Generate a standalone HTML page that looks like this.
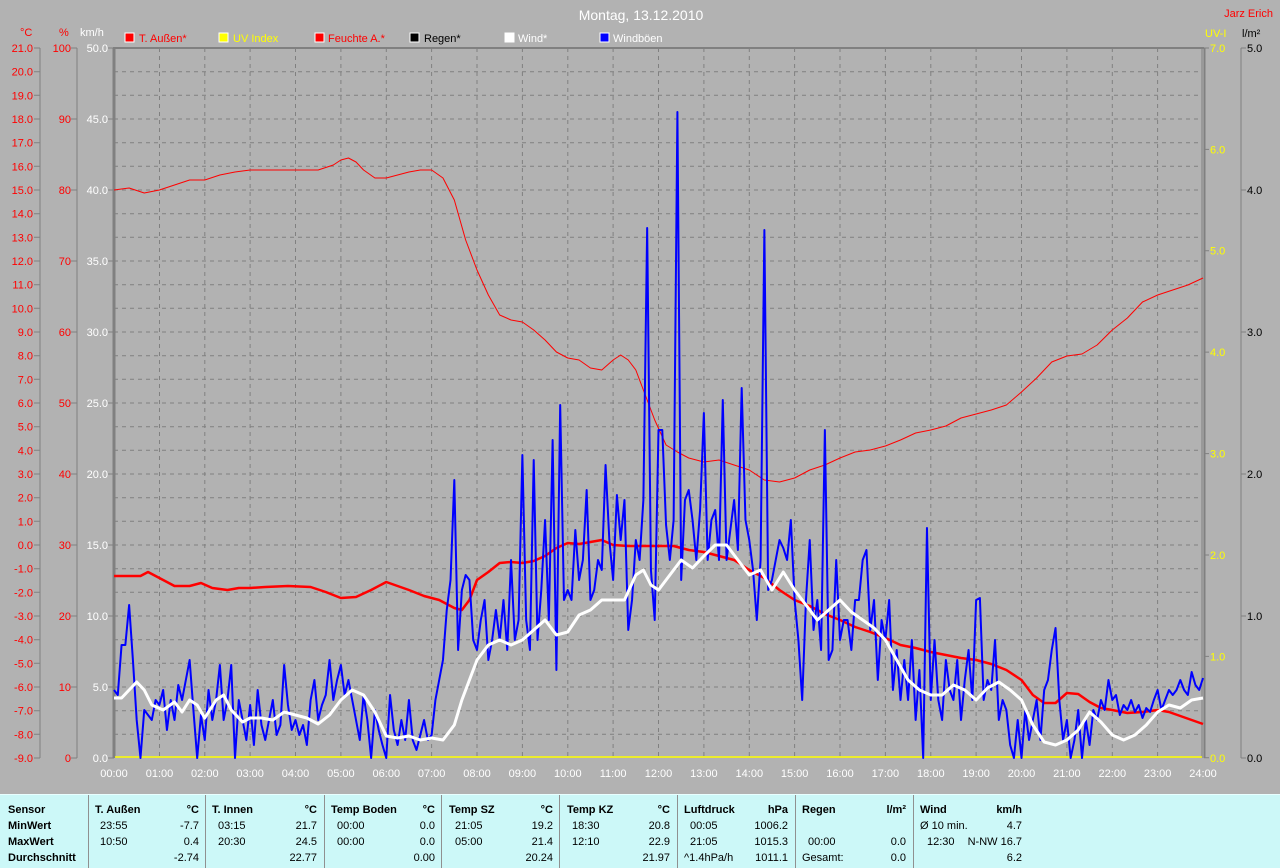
<!DOCTYPE html>
<html><head><meta charset="utf-8"><style>
html,body{margin:0;padding:0;background:#b2b2b2;}
body{width:1280px;height:867px;overflow:hidden;position:relative;font-family:"Liberation Sans",sans-serif;}
svg{position:absolute;left:0;top:0;}
.t{position:absolute;top:794px;left:0;width:1280px;height:73px;background:#ccf8f8;border-top:1px solid #e8ffff;}
.t div{position:absolute;font-size:11px;line-height:16px;white-space:nowrap;color:#000;}
.b{font-weight:bold;}
.sep{position:absolute;top:0;width:1px;height:73px;background:#909090;}
</style></head><body>
<svg width="1280" height="867" xmlns="http://www.w3.org/2000/svg" font-family="Liberation Sans, sans-serif" font-size="12">
<text x="641" y="20" fill="#fff" font-size="14" text-anchor="middle">Montag, 13.12.2010</text>
<text x="1273" y="17" fill="#f00" font-size="11" text-anchor="end">Jarz Erich</text>
<g font-size="11">
<rect x="125" y="33" width="9" height="9" fill="#f00" stroke="#fff"/><text x="139" y="42" fill="#f00">T. Außen*</text>
<rect x="219" y="33" width="9" height="9" fill="#ff0" stroke="#fff"/><text x="233" y="42" fill="#ff0">UV Index</text>
<rect x="315" y="33" width="9" height="9" fill="#f00" stroke="#fff"/><text x="328" y="42" fill="#f00">Feuchte A.*</text>
<rect x="410" y="33" width="9" height="9" fill="#000" stroke="#fff"/><text x="424" y="42" fill="#000">Regen*</text>
<rect x="505" y="33" width="9" height="9" fill="#fff" stroke="#fff"/><text x="518" y="42" fill="#fff">Wind*</text>
<rect x="600" y="33" width="9" height="9" fill="#00f" stroke="#fff"/><text x="613" y="42" fill="#fff">Windböen</text>
</g>
<g font-size="11">
<text x="20" y="36" fill="#f00">°C</text>
<text x="59" y="36" fill="#f00">%</text>
<text x="80" y="36" fill="#fff">km/h</text>
<text x="1205" y="37" fill="#ff0">UV-I</text>
<text x="1242" y="37" fill="#000">l/m²</text>
</g>
<g stroke="#808080" stroke-dasharray="4,4" stroke-width="1">
<path d="M114 71.7H1202M114 95.3H1202M114 119H1202M114 142.7H1202M114 166.3H1202M114 190H1202M114 213.7H1202M114 237.3H1202M114 261H1202M114 284.7H1202M114 308.3H1202M114 332H1202M114 355.7H1202M114 379.3H1202M114 403H1202M114 426.7H1202M114 450.3H1202M114 474H1202M114 497.7H1202M114 521.3H1202M114 545H1202M114 568.7H1202M114 592.3H1202M114 616H1202M114 639.7H1202M114 663.3H1202M114 687H1202M114 710.7H1202M114 734.3H1202"/>
<path d="M159.5 48V757M204.8 48V757M250.1 48V757M295.5 48V757M340.9 48V757M386.3 48V757M431.6 48V757M477 48V757M522.4 48V757M567.8 48V757M613.1 48V757M658.5 48V757M703.9 48V757M749.3 48V757M794.6 48V757M840 48V757M885.4 48V757M930.8 48V757M976.1 48V757M1021.5 48V757M1066.9 48V757M1112.3 48V757M1157.6 48V757"/>
</g>
<g stroke="#808080" fill="none">
<path d="M114 48V758" stroke-width="3"/>
<path d="M113 48H1204" stroke-width="2"/>
<path d="M1202 48V758" stroke-width="1"/>
<path d="M1204.5 48V758" stroke-width="2"/>
<path d="M40 48V758M77 48V758M1241 48V758"/>
<path d="M34 48H40M34 71.7H40M34 95.3H40M34 119H40M34 142.7H40M34 166.3H40M34 190H40M34 213.7H40M34 237.3H40M34 261H40M34 284.7H40M34 308.3H40M34 332H40M34 355.7H40M34 379.3H40M34 403H40M34 426.7H40M34 450.3H40M34 474H40M34 497.7H40M34 521.3H40M34 545H40M34 568.7H40M34 592.3H40M34 616H40M34 639.7H40M34 663.3H40M34 687H40M34 710.7H40M34 734.3H40M34 758H40"/>
<path d="M71 48H77M71 119H77M71 190H77M71 261H77M71 332H77M71 403H77M71 474H77M71 545H77M71 616H77M71 687H77M71 758H77"/>
<path d="M108 48H114M108 119H114M108 190H114M108 261H114M108 332H114M108 403H114M108 474H114M108 545H114M108 616H114M108 687H114M108 758H114"/>
<path d="M1204 48H1209M1204 149.4H1209M1204 250.7H1209M1204 352.1H1209M1204 453.6H1209M1204 555H1209M1204 656.4H1209M1204 757.8H1209"/>
<path d="M1241 48H1246M1241 190H1246M1241 332H1246M1241 474H1246M1241 616H1246M1241 758H1246"/>
</g>
<g fill="#f00" font-size="11" text-anchor="end">
<text x="33" y="52">21.0</text><text x="33" y="75.7">20.0</text><text x="33" y="99.3">19.0</text><text x="33" y="123">18.0</text><text x="33" y="146.7">17.0</text><text x="33" y="170.3">16.0</text><text x="33" y="194">15.0</text><text x="33" y="217.7">14.0</text><text x="33" y="241.3">13.0</text><text x="33" y="265">12.0</text><text x="33" y="288.7">11.0</text><text x="33" y="312.3">10.0</text><text x="33" y="336">9.0</text><text x="33" y="359.7">8.0</text><text x="33" y="383.3">7.0</text><text x="33" y="407">6.0</text><text x="33" y="430.7">5.0</text><text x="33" y="454.3">4.0</text><text x="33" y="478">3.0</text><text x="33" y="501.7">2.0</text><text x="33" y="525.3">1.0</text><text x="33" y="549">0.0</text><text x="33" y="572.7">-1.0</text><text x="33" y="596.3">-2.0</text><text x="33" y="620">-3.0</text><text x="33" y="643.7">-4.0</text><text x="33" y="667.3">-5.0</text><text x="33" y="691">-6.0</text><text x="33" y="714.7">-7.0</text><text x="33" y="738.3">-8.0</text><text x="33" y="762">-9.0</text>
</g>
<g fill="#f00" font-size="11" text-anchor="end">
<text x="71" y="52">100</text><text x="71" y="123">90</text><text x="71" y="194">80</text><text x="71" y="265">70</text><text x="71" y="336">60</text><text x="71" y="407">50</text><text x="71" y="478">40</text><text x="71" y="549">30</text><text x="71" y="620">20</text><text x="71" y="691">10</text><text x="71" y="762">0</text>
</g>
<g fill="#fff" font-size="11" text-anchor="end">
<text x="108" y="52">50.0</text><text x="108" y="123">45.0</text><text x="108" y="194">40.0</text><text x="108" y="265">35.0</text><text x="108" y="336">30.0</text><text x="108" y="407">25.0</text><text x="108" y="478">20.0</text><text x="108" y="549">15.0</text><text x="108" y="620">10.0</text><text x="108" y="691">5.0</text><text x="108" y="762">0.0</text>
</g>
<g fill="#ff0" font-size="11">
<text x="1210" y="52">7.0</text><text x="1210" y="153.4">6.0</text><text x="1210" y="254.7">5.0</text><text x="1210" y="356.1">4.0</text><text x="1210" y="457.6">3.0</text><text x="1210" y="559">2.0</text><text x="1210" y="660.4">1.0</text><text x="1210" y="762">0.0</text>
</g>
<g fill="#000" font-size="11">
<text x="1247" y="52">5.0</text><text x="1247" y="194">4.0</text><text x="1247" y="336">3.0</text><text x="1247" y="478">2.0</text><text x="1247" y="620">1.0</text><text x="1247" y="762">0.0</text>
</g>
<g fill="#fff" font-size="11" text-anchor="middle">
<text x="114" y="777">00:00</text><text x="159.5" y="777">01:00</text><text x="204.8" y="777">02:00</text><text x="250.1" y="777">03:00</text><text x="295.5" y="777">04:00</text><text x="340.9" y="777">05:00</text><text x="386.3" y="777">06:00</text><text x="431.6" y="777">07:00</text><text x="477" y="777">08:00</text><text x="522.4" y="777">09:00</text><text x="567.8" y="777">10:00</text><text x="613.1" y="777">11:00</text><text x="658.5" y="777">12:00</text><text x="703.9" y="777">13:00</text><text x="749.3" y="777">14:00</text><text x="794.6" y="777">15:00</text><text x="840" y="777">16:00</text><text x="885.4" y="777">17:00</text><text x="930.8" y="777">18:00</text><text x="976.1" y="777">19:00</text><text x="1021.5" y="777">20:00</text><text x="1066.9" y="777">21:00</text><text x="1112.3" y="777">22:00</text><text x="1157.6" y="777">23:00</text><text x="1203" y="777">24:00</text>
</g>
<path d="M115 757H1202" stroke="#ff0" stroke-width="1.5"/>
<g transform="translate(114,0) scale(0.75625,1)" fill="none" stroke-linejoin="round">
<path vector-effect="non-scaling-stroke" stroke="#f00" stroke-width="1" d="M0 190L20 188L40 193L60 190L80 185L100 180L120 180L140 175L160 172L180 170L210 170L240 170L270 170L290 165L300 160L310 158L320 162L330 170L345 178L360 178L375 175L390 172L405 170L420 170L435 178L450 200L465 240L480 270L495 295L510 315L525 320L540 322L555 330L570 340L585 352L600 358L615 360L630 368L645 370L660 360L670 355L680 360L690 370L700 390L715 420L730 445L745 452L760 458L780 462L800 460L820 465L840 470L860 480L880 482L900 478L920 470L940 465L960 458L980 452L1000 450L1020 446L1040 440L1060 433L1080 430L1100 426L1120 418L1140 414L1160 410L1180 405L1200 392L1220 378L1240 362L1260 356L1280 354L1300 345L1320 330L1340 318L1360 302L1380 295L1400 290L1420 285L1440 278"/>
<path vector-effect="non-scaling-stroke" stroke="#f00" stroke-width="2.5" d="M0 576L20 576L35 576L45 572L60 578L80 586L100 586L115 583L130 588L150 590L165 588L180 588L200 587L230 586L260 587L280 592L300 598L320 597L340 590L360 582L375 586L390 590L410 596L430 600L450 608L460 610L470 600L480 580L495 572L510 563L525 562L540 563L555 561L570 556L585 548L600 543L615 544L630 542L645 540L660 545L680 546L700 546L720 546L740 546L760 550L780 552L800 556L820 560L840 570L860 578L880 590L900 600L920 606L940 614L960 620L980 627L1000 632L1020 638L1040 645L1060 648L1080 652L1100 655L1120 658L1140 660L1160 664L1180 670L1200 680L1215 695L1230 703L1245 703L1260 693L1275 694L1290 702L1305 708L1320 710L1340 713L1360 712L1380 710L1395 712L1410 716L1425 720L1440 724"/>
<path vector-effect="non-scaling-stroke" stroke="#00f" stroke-width="2" d="M0 690L5 695L10 645L15 645L20 605L25 660L30 720L35 758L40 710L45 715L50 720L55 700L60 705L65 690L70 730L75 700L80 720L85 685L90 700L95 680L100 660L105 710L110 758L115 715L120 740L125 690L130 720L135 700L140 665L145 720L150 700L155 665L160 758L165 700L170 720L175 740L180 705L185 745L190 690L195 725L200 740L205 720L210 700L215 735L220 725L225 665L230 705L235 730L240 720L245 735L250 725L255 745L260 700L265 680L270 720L275 705L280 695L285 660L290 700L295 680L300 665L305 695L310 680L315 700L320 720L325 740L330 695L335 720L340 758L345 710L350 730L355 745L360 758L365 695L370 730L375 745L380 720L385 740L390 700L395 740L400 750L405 735L410 720L415 740L420 735L425 700L430 680L435 660L440 610L445 580L450 480L455 650L460 590L465 575L470 580L475 640L480 650L485 620L490 600L495 660L500 640L505 610L510 640L515 600L520 650L525 560L530 640L535 620L540 455L545 620L550 650L555 460L560 640L565 590L570 520L575 620L580 440L585 670L590 405L595 600L600 590L605 600L610 530L615 580L620 560L625 490L630 600L635 590L640 560L645 570L650 465L655 540L660 580L665 495L670 540L675 500L680 630L685 600L690 540L695 560L700 500L705 228L710 570L715 620L720 430L725 430L730 525L735 560L740 520L745 112L750 580L755 500L760 490L765 520L770 560L775 510L780 413L785 560L790 520L795 510L800 560L805 400L810 560L815 530L820 500L825 550L830 388L835 520L840 540L845 570L850 620L855 560L860 230L865 590L870 580L875 560L880 540L885 548L890 560L895 520L900 600L905 640L910 700L915 600L920 540L925 630L930 600L935 650L940 430L945 660L950 650L955 560L960 640L965 620L970 620L975 650L980 600L985 600L990 560L995 550L1000 630L1005 600L1010 680L1015 620L1020 640L1025 600L1030 690L1035 650L1040 700L1045 660L1050 700L1055 640L1060 720L1065 670L1070 758L1075 528L1080 700L1085 640L1090 700L1095 720L1100 660L1105 690L1110 700L1115 660L1120 720L1125 680L1130 650L1135 700L1140 600L1145 598L1150 700L1155 680L1160 690L1165 640L1170 720L1175 700L1180 710L1185 745L1190 758L1195 720L1200 758L1205 710L1210 740L1215 720L1220 700L1225 740L1230 690L1235 680L1240 650L1245 628L1250 700L1255 740L1260 720L1265 758L1270 740L1275 710L1280 758L1285 720L1290 745L1295 710L1300 720L1305 700L1310 710L1315 680L1320 700L1325 695L1330 715L1335 705L1340 710L1345 700L1350 712L1355 705L1360 718L1365 708L1370 712L1375 700L1380 690L1385 710L1390 700L1395 690L1400 695L1405 690L1410 680L1415 690L1420 695L1425 672L1430 685L1435 690L1440 678"/>
<path vector-effect="non-scaling-stroke" stroke="#fff" stroke-width="3" d="M0 698L10 698L30 682L40 690L50 705L65 710L80 702L90 712L100 700L110 705L120 718L135 700L145 695L155 710L170 722L180 718L195 718L210 720L225 712L240 715L255 718L270 724L285 715L300 700L315 690L330 695L345 712L360 736L375 738L390 736L405 740L420 738L435 740L450 725L460 700L470 680L480 660L495 645L510 640L525 645L540 640L555 630L570 620L585 635L600 632L615 615L630 610L645 600L660 600L675 600L690 575L700 570L710 585L720 590L735 575L750 560L765 568L780 556L795 545L810 545L825 560L840 575L855 570L870 590L885 572L900 590L915 605L930 620L945 610L960 600L975 612L990 620L1005 628L1020 640L1035 660L1050 680L1065 690L1080 695L1095 695L1110 685L1125 690L1140 700L1155 688L1170 682L1185 690L1200 700L1215 725L1230 742L1245 745L1260 740L1275 730L1290 712L1305 722L1320 735L1335 740L1350 735L1365 725L1380 712L1395 705L1410 708L1425 700L1440 698"/>
</g>
</svg>
<div class="t">
<div class="sep" style="left:88px"></div><div class="sep" style="left:205px"></div><div class="sep" style="left:324px"></div><div class="sep" style="left:441px"></div><div class="sep" style="left:559px"></div><div class="sep" style="left:677px"></div><div class="sep" style="left:795px"></div><div class="sep" style="left:913px"></div>
<div class="b" style="left:8px;top:7px">Sensor</div><div class="b" style="left:8px;top:23px">MinWert</div><div class="b" style="left:8px;top:39px">MaxWert</div><div class="b" style="left:8px;top:55px">Durchschnitt</div>

<div class="b" style="left:95px;top:7px">T. Außen</div><div class="b" style="left:150px;width:49px;text-align:right;top:7px">°C</div>
<div style="left:100px;top:23px">23:55</div><div style="left:150px;width:49px;text-align:right;top:23px">-7.7</div>
<div style="left:100px;top:39px">10:50</div><div style="left:150px;width:49px;text-align:right;top:39px">0.4</div>
<div style="left:150px;width:49px;text-align:right;top:55px">-2.74</div>

<div class="b" style="left:212px;top:7px">T. Innen</div><div class="b" style="left:268px;width:49px;text-align:right;top:7px">°C</div>
<div style="left:218px;top:23px">03:15</div><div style="left:268px;width:49px;text-align:right;top:23px">21.7</div>
<div style="left:218px;top:39px">20:30</div><div style="left:268px;width:49px;text-align:right;top:39px">24.5</div>
<div style="left:268px;width:49px;text-align:right;top:55px">22.77</div>

<div class="b" style="left:331px;top:7px">Temp Boden</div><div class="b" style="left:386px;width:49px;text-align:right;top:7px">°C</div>
<div style="left:337px;top:23px">00:00</div><div style="left:386px;width:49px;text-align:right;top:23px">0.0</div>
<div style="left:337px;top:39px">00:00</div><div style="left:386px;width:49px;text-align:right;top:39px">0.0</div>
<div style="left:386px;width:49px;text-align:right;top:55px">0.00</div>

<div class="b" style="left:449px;top:7px">Temp SZ</div><div class="b" style="left:504px;width:49px;text-align:right;top:7px">°C</div>
<div style="left:455px;top:23px">21:05</div><div style="left:504px;width:49px;text-align:right;top:23px">19.2</div>
<div style="left:455px;top:39px">05:00</div><div style="left:504px;width:49px;text-align:right;top:39px">21.4</div>
<div style="left:504px;width:49px;text-align:right;top:55px">20.24</div>

<div class="b" style="left:567px;top:7px">Temp KZ</div><div class="b" style="left:621px;width:49px;text-align:right;top:7px">°C</div>
<div style="left:572px;top:23px">18:30</div><div style="left:621px;width:49px;text-align:right;top:23px">20.8</div>
<div style="left:572px;top:39px">12:10</div><div style="left:621px;width:49px;text-align:right;top:39px">22.9</div>
<div style="left:621px;width:49px;text-align:right;top:55px">21.97</div>

<div class="b" style="left:684px;top:7px">Luftdruck</div><div class="b" style="left:739px;width:49px;text-align:right;top:7px">hPa</div>
<div style="left:690px;top:23px">00:05</div><div style="left:739px;width:49px;text-align:right;top:23px">1006.2</div>
<div style="left:690px;top:39px">21:05</div><div style="left:739px;width:49px;text-align:right;top:39px">1015.3</div>
<div style="left:684px;top:55px">^1.4hPa/h</div><div style="left:739px;width:49px;text-align:right;top:55px">1011.1</div>

<div class="b" style="left:802px;top:7px">Regen</div><div class="b" style="left:857px;width:49px;text-align:right;top:7px">l/m²</div>
<div style="left:808px;top:39px">00:00</div><div style="left:857px;width:49px;text-align:right;top:39px">0.0</div>
<div style="left:802px;top:55px">Gesamt:</div><div style="left:857px;width:49px;text-align:right;top:55px">0.0</div>

<div class="b" style="left:920px;top:7px">Wind</div><div class="b" style="left:973px;width:49px;text-align:right;top:7px">km/h</div>
<div style="left:920px;top:23px">Ø 10 min.</div><div style="left:973px;width:49px;text-align:right;top:23px">4.7</div>
<div style="left:927px;top:39px">12:30</div><div style="left:953px;width:69px;text-align:right;top:39px">N-NW 16.7</div>
<div style="left:973px;width:49px;text-align:right;top:55px">6.2</div>
</div>
</body></html>
